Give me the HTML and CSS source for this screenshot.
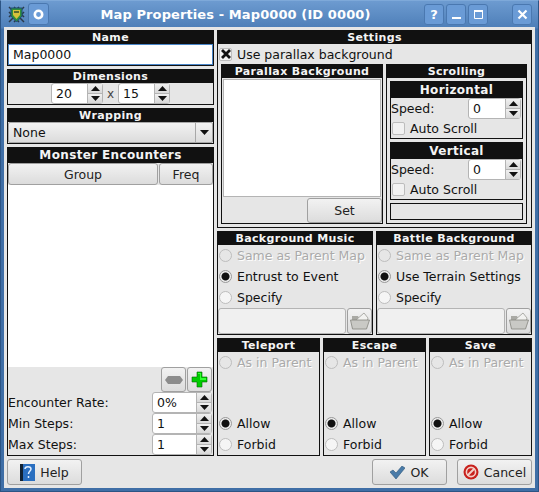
FILE: index.html
```html
<!doctype html>
<html>
	<head>
		<meta name="viewport" content="width=device-width, initial-scale=1.0">
		<title>Map Properties - Map0000 (ID 0000)</title>
		<link rel="stylesheet" href="styles.css">
	</head>
	<body>
		<svg class="defs" width="0" height="0">
			<symbol id="up" viewBox="0 0 9 5"><path d="M4.500 0 9 5H0z"/></symbol>
			<symbol id="down" viewBox="0 0 9 5"><path d="M0 0h9L4.500 5z"/></symbol>
			<symbol id="folder" viewBox="0 0 20 18">
				<path d="M2 4h6l1 2h8v10H2z" fill="#a9a9a4"/>
				<path d="M6 8 14 1l4 5-1 4z" fill="#f2f2f0" stroke="#9a9a96" stroke-width=".8"/>
				<path d="M0.500 8h19l-3 9H2.500z" fill="#c9c9c5" stroke="#85857f" stroke-width=".8"/>
			</symbol>
		</svg>

		<div class="window">
			<div class="titlebar">
				<svg class="app-icon" viewBox="0 0 17 17">
					<path d="M1 1 16 16M16 1 1 16M1 6l10 10M6 1l10 10M16 6 6 16M11 1 1 11" stroke="#2b3a4a" stroke-width="1.500"/>
					<path d="M3 2h11v8l-5.500 6L3 10z" fill="#2f8f3a" stroke="#1d4f7a"/>
					<path d="M5 4h7v5l-3.500 4L5 9z" fill="#d6c13c"/>
					<path d="M6 5h5v2H6z" fill="#5a6b30"/>
				</svg>
				<div class="tb-btn pin"><svg viewBox="0 0 11 11" width="11" height="11"><circle cx="5.500" cy="5.500" r="3.700" fill="none" stroke="#fff" stroke-width="2.600"/></svg></div>
				<div class="tb-title">Map Properties - Map0000 (ID 0000)</div>
				<div class="tb-btn help">?</div>
				<div class="tb-btn"><svg viewBox="0 0 11 11" width="11" height="11"><path d="M1 8h9v2H1z" fill="#fff"/></svg></div>
				<div class="tb-btn"><svg viewBox="0 0 11 11" width="11" height="11"><path d="M1.500 2h8v7.500h-8z" fill="none" stroke="#fff"/><path d="M1 1h9v2H1z" fill="#fff"/></svg></div>
				<div class="tb-btn close"><svg viewBox="0 0 11 11" width="11" height="11"><path d="M1.500 1.500l8 8M9.500 1.500l-8 8" stroke="#fff" stroke-width="2.200"/></svg></div>
			</div>

			<div class="client">
				<div class="main">
					<div class="col-left">
						<div class="panel">
							<div class="panel-title">Name</div>
							<div class="name-input">Map0000</div>
						</div>
						<div class="panel">
							<div class="panel-title">Dimensions</div>
							<div class="dims">
								<div class="spin w52"><span class="spin-val">20</span><span class="spin-btns"><i><svg width="9" height="5"><use href="#up"/></svg></i><i><svg width="9" height="5"><use href="#down"/></svg></i></span></div>
								<span class="dims-x">x</span>
								<div class="spin w52"><span class="spin-val">15</span><span class="spin-btns"><i><svg width="9" height="5"><use href="#up"/></svg></i><i><svg width="9" height="5"><use href="#down"/></svg></i></span></div>
							</div>
						</div>
						<div class="panel">
							<div class="panel-title">Wrapping</div>
							<div class="combo"><span class="combo-val">None</span><span class="combo-btn"><svg width="9" height="5"><use href="#down"/></svg></span></div>
						</div>
						<div class="panel monsters">
							<div class="panel-title big">Monster Encounters</div>
							<div class="list-head"><div class="btn group">Group</div><div class="btn freq">Freq</div></div>
							<div class="list-body"></div>
							<div class="list-tools">
								<div class="btn tool"><svg width="18" height="8" viewBox="0 0 18 8"><path d="M3 0h12l3 4-3 4H3L0 4z" fill="#8c8c8c"/></svg></div>
								<div class="btn tool"><svg width="17" height="17" viewBox="0 0 17 17"><path d="M6 1h5v5h5v5h-5v5H6v-5H1V6h5z" fill="#0c0" stroke="#060" stroke-width=".6"/><path d="M7 2h3v5h5v2H9V3H7z" fill="#3f3"/></svg></div>
							</div>
							<div class="form-row"><span>Encounter Rate:</span><div class="spin w60"><span class="spin-val">0%</span><span class="spin-btns"><i><svg width="9" height="5"><use href="#up"/></svg></i><i><svg width="9" height="5"><use href="#down"/></svg></i></span></div></div>
							<div class="form-row"><span>Min Steps:</span><div class="spin w60"><span class="spin-val">1</span><span class="spin-btns"><i><svg width="9" height="5"><use href="#up"/></svg></i><i><svg width="9" height="5"><use href="#down"/></svg></i></span></div></div>
							<div class="form-row"><span>Max Steps:</span><div class="spin w60"><span class="spin-val">1</span><span class="spin-btns"><i><svg width="9" height="5"><use href="#up"/></svg></i><i><svg width="9" height="5"><use href="#down"/></svg></i></span></div></div>
						</div>
					</div>

					<div class="col-right">
						<div class="panel settings">
							<div class="panel-title">Settings</div>
							<div class="use-parallax"><span class="check checked"><svg width="10" height="10" viewBox="0 0 10 10"><path d="M1 1l8 8M9 1 1 9" stroke="#111" stroke-width="2.800"/></svg></span>Use parallax background</div>
							<div class="settings-row">
								<div class="panel parallax">
									<div class="panel-title">Parallax Background</div>
									<div class="parallax-view"></div>
									<div class="parallax-foot"><div class="btn set">Set</div></div>
								</div>
								<div class="panel scrolling">
									<div class="panel-title">Scrolling</div>
									<div class="panel scroll-box">
										<div class="panel-title big">Horizontal</div>
										<div class="form-row"><span>Speed:</span><div class="spin w53"><span class="spin-val">0</span><span class="spin-btns"><i><svg width="9" height="5"><use href="#up"/></svg></i><i><svg width="9" height="5"><use href="#down"/></svg></i></span></div></div>
										<div class="check-row"><span class="check"></span>Auto Scroll</div>
									</div>
									<div class="panel scroll-box">
										<div class="panel-title big">Vertical</div>
										<div class="form-row"><span>Speed:</span><div class="spin w53"><span class="spin-val">0</span><span class="spin-btns"><i><svg width="9" height="5"><use href="#up"/></svg></i><i><svg width="9" height="5"><use href="#down"/></svg></i></span></div></div>
										<div class="check-row"><span class="check"></span>Auto Scroll</div>
									</div>
									<div class="panel scroll-empty"></div>
								</div>
							</div>
						</div>

						<div class="two-up">
							<div class="panel">
								<div class="panel-title">Background Music</div>
								<div class="radio-row off"><span class="radio"></span>Same as Parent Map</div>
								<div class="radio-row"><span class="radio on"></span>Entrust to Event</div>
								<div class="radio-row"><span class="radio"></span>Specify</div>
								<div class="file-row"><div class="file-input"></div><div class="btn file-btn"><svg width="20" height="18"><use href="#folder"/></svg></div></div>
							</div>
							<div class="panel">
								<div class="panel-title">Battle Background</div>
								<div class="radio-row off"><span class="radio"></span>Same as Parent Map</div>
								<div class="radio-row"><span class="radio on"></span>Use Terrain Settings</div>
								<div class="radio-row"><span class="radio"></span>Specify</div>
								<div class="file-row"><div class="file-input"></div><div class="btn file-btn"><svg width="20" height="18"><use href="#folder"/></svg></div></div>
							</div>
						</div>

						<div class="three-up">
							<div class="panel perm">
								<div class="panel-title">Teleport</div>
								<div class="radio-row off"><span class="radio"></span>As in Parent</div>
								<div class="spacer"></div>
								<div class="radio-row"><span class="radio on"></span>Allow</div>
								<div class="radio-row"><span class="radio"></span>Forbid</div>
							</div>
							<div class="panel perm">
								<div class="panel-title">Escape</div>
								<div class="radio-row off"><span class="radio"></span>As in Parent</div>
								<div class="spacer"></div>
								<div class="radio-row"><span class="radio on"></span>Allow</div>
								<div class="radio-row"><span class="radio"></span>Forbid</div>
							</div>
							<div class="panel perm">
								<div class="panel-title">Save</div>
								<div class="radio-row off"><span class="radio"></span>As in Parent</div>
								<div class="spacer"></div>
								<div class="radio-row"><span class="radio on"></span>Allow</div>
								<div class="radio-row"><span class="radio"></span>Forbid</div>
							</div>
						</div>
					</div>
				</div>

				<div class="footer">
					<div class="btn action">
						<svg width="15" height="19" viewBox="0 0 15 19"><path d="M0 1h4v17H0z" fill="#123"/><path d="M3 1h12v17H3z" fill="#2a6fc0"/><path d="M5 6c0-3 6-3 6 0 0 2-2.500 2-2.500 5M8.500 13v2" fill="none" stroke="#dfeeff" stroke-width="1.500"/></svg>
						Help
					</div>
					<div class="footer-gap"></div>
					<div class="btn action">
						<svg width="15" height="13" viewBox="0 0 15 13"><path d="M0 6l3-2 3 3 6-7 3 2-9 11z" fill="#4a7ba8" stroke="#2b5578" stroke-width=".6"/></svg>
						OK
					</div>
					<div class="btn action">
						<svg width="16" height="16" viewBox="0 0 16 16"><circle cx="8" cy="8" r="7.500" fill="#c8201c"/><circle cx="8" cy="8" r="4.600" fill="none" stroke="#f3d0c8" stroke-width="1.600"/><path d="M4.500 11.500l7-7" stroke="#f3d0c8" stroke-width="2"/></svg>
						Cancel
					</div>
				</div>
			</div>
		</div>
	</body>
</html>
```

FILE: styles.css
```css
body {
	margin: 0;
	font-family: "DejaVu Sans", sans-serif;
	font-size: 12.5px;
	color: #111;
	background-color: #3f6ea6;
}
.defs {
	position: absolute;
}
.window {
	display: flex;
	flex-direction: column;
	width: 539px;
	height: 492px;
	box-sizing: border-box;
	background: linear-gradient(#6d9bd0, #4d7eb8 27px, #3f6ea6 28px);
	border: 1px solid #2c5484;
	border-top-color: #7ea9d9;
}

/* title bar */
.titlebar {
	display: flex;
	align-items: center;
	height: 26px;
	flex: none;
	padding: 0 6px 0 7px;
}
.app-icon {
	width: 17px;
	height: 17px;
	margin-right: 3px;
}
.tb-btn {
	display: flex;
	align-items: center;
	justify-content: center;
	width: 18px;
	height: 19px;
	margin-left: 2px;
	border: 1px solid #4a78b0;
	border-radius: 3px;
	background-color: #6a9bd6;
	color: #fff;
	font-weight: bold;
	font-size: 13px;
}
.pin {
	width: 19px;
	height: 20px;
	margin-left: 0;
}
.close {
	margin-left: 24px;
}
.tb-title {
	flex: 1;
	text-align: center;
	color: #fff;
	font-weight: bold;
	font-size: 13px;
	letter-spacing: 0.1px;
	white-space: nowrap;
}

/* main area */
.client {
	flex: 1;
	display: flex;
	flex-direction: column;
	margin: 0 3px 3px 3px;
	padding: 3px;
	background-color: #e6e6e6;
	gap: 3px;
}
.main {
	flex: 1;
	display: grid;
	grid-template-columns: 207px 315px;
	gap: 3px;
	min-height: 0;
}
.col-left,
.col-right {
	display: flex;
	flex-direction: column;
	gap: 3px;
	min-height: 0;
}
.panel {
	display: flex;
	flex-direction: column;
	border: 1px solid #111;
	box-sizing: border-box;
}
.panel-title {
	flex: none;
	height: 13px;
	line-height: 13px;
	background-color: #111;
	color: #f4f4f4;
	font-weight: bold;
	font-size: 11px;
	letter-spacing: 0.35px;
	text-align: center;
}
.panel-title.big {
	height: 15px;
	line-height: 15px;
	font-size: 12px;
	letter-spacing: 0.35px;
}

/* inputs */
.name-input {
	height: 19px;
	line-height: 19px;
	padding-left: 4px;
	background-color: #fff;
	border: 1px solid #4a86c8;
}
.spin {
	display: flex;
	height: 21px;
	box-sizing: border-box;
	background-color: #fff;
	border: 1px solid #b4b4b4;
	border-radius: 3px;
}
.w52 { width: 52px; }
.w53 { width: 53px; }
.w60 { width: 60px; }
.spin-val {
	flex: 1;
	line-height: 19px;
	padding-left: 4px;
}
.spin-btns {
	display: flex;
	flex-direction: column;
	width: 14px;
	border-left: 1px solid #b4b4b4;
	background: #e2e2e2;
}
.spin-btns i {
	flex: 1;
	display: flex;
	align-items: center;
	justify-content: center;
	background: linear-gradient(#f0f0f0, #d8d8d8);
}
.spin-btns i + i {
	border-top: 1px solid #b4b4b4;
}
.spin-btns svg {
	display: block;
	fill: #111;
}
.dims {
	display: flex;
	justify-content: center;
	align-items: center;
	gap: 4px;
	height: 21px;
}
.dims-x {
	width: 7px;
	text-align: center;
	color: #444;
	font-size: 12px;
}
.combo {
	display: flex;
	height: 21px;
	box-sizing: border-box;
	border: 1px solid #a8a8a8;
	border-radius: 2px;
	background: linear-gradient(#f2f2f2, #dcdcdc);
}
.combo-val {
	flex: 1;
	line-height: 19px;
	padding-left: 4px;
}
.combo-btn {
	display: flex;
	align-items: center;
	justify-content: center;
	width: 16px;
	border-left: 1px solid #a8a8a8;
}
.combo-btn svg {
	fill: #111;
}
.btn {
	display: flex;
	align-items: center;
	justify-content: center;
	box-sizing: border-box;
	border: 1px solid #a0a0a0;
	border-radius: 3px;
	background: linear-gradient(#f2f2f2, #dcdcdc);
	color: #222;
}

/* monster encounters */
.monsters {
	flex: 1;
	min-height: 0;
}
.list-head {
	display: flex;
	height: 22px;
	flex: none;
	gap: 1px;
}
.group {
	width: 150px;
}
.freq {
	flex: 1;
}
.list-body {
	flex: 1;
	background-color: #fff;
}
.list-tools {
	display: flex;
	justify-content: flex-end;
	gap: 1px;
	padding-right: 1px;
}
.tool {
	width: 25px;
	height: 25px;
}
.form-row {
	display: flex;
	justify-content: space-between;
	align-items: center;
	padding-right: 1px;
	height: 21px;
}

/* settings */
.settings {
	height: 198px;
	flex: none;
}
.use-parallax,
.check-row {
	display: flex;
	align-items: center;
	gap: 5px;
}
.use-parallax {
	height: 20px;
	padding-left: 1px;
}
.check {
	display: flex;
	align-items: center;
	justify-content: center;
	width: 11px;
	height: 11px;
	background-color: #f2f2f2;
	border: 1px solid #bdbdbd;
	border-radius: 2px;
}
.settings-row {
	flex: 1;
	display: flex;
	gap: 3px;
	padding: 0 4px 0 3px;
	min-height: 0;
	margin-bottom: 3px;
}
.parallax {
	width: 162px;
	flex: none;
}
.parallax-view {
	flex: 1;
	margin: 1px;
	background-color: #fff;
	border: 1px solid #b4b4b4;
}
.parallax-foot {
	display: flex;
	justify-content: flex-end;
	flex: none;
}
.set {
	width: 75px;
	height: 25px;
}
.scrolling {
	flex: 1;
	gap: 3px;
	min-width: 0;
}
.scrolling .panel {
	margin: 0 3px;
}
.scrolling .panel-title.big {
	height: 16px;
	line-height: 16px;
}
.scroll-box {
	height: 58px;
	flex: none;
}
.scroll-box .form-row {
	height: 20px;
}
.check-row {
	height: 20px;
	padding-left: 1px;
}
.scroll-empty {
	height: 17px;
	flex: none;
}

/* radios */
.two-up {
	display: grid;
	grid-template-columns: 156px 156px;
	gap: 3px;
	height: 104px;
	flex: none;
}
.three-up {
	flex: 1;
	display: grid;
	grid-template-columns: 103px 103px 103px;
	gap: 3px;
	min-height: 0;
}
.radio-row {
	display: flex;
	align-items: center;
	gap: 5px;
	height: 21px;
	flex: none;
	padding-left: 1px;
}
.radio-row.off {
	color: #aaa;
	text-shadow: 1px 1px 0 #fff;
}
.radio {
	display: block;
	flex: none;
	width: 11px;
	height: 11px;
	border: 1px solid #bdbdbd;
	border-radius: 50%;
	background-color: #f5f5f5;
}
.radio.on {
	background: radial-gradient(circle, #111 0 3.500px, #ededed 4.500px);
	border-color: #999;
}
.off .radio {
	background-color: #e6e6e6;
}
.spacer {
	flex: 1;
}
.file-row {
	display: flex;
	flex: 1;
	gap: 1px;
}
.file-input {
	flex: 1;
	background-color: #f0f0f0;
	border: 1px solid #b4b4b4;
	border-radius: 3px;
}
.file-btn {
	width: 25px;
}

/* footer */
.footer {
	display: flex;
	flex: none;
	height: 26px;
	gap: 10px;
}
.footer-gap {
	flex: 1;
}
.action {
	width: 75px;
	gap: 5px;
}
```
